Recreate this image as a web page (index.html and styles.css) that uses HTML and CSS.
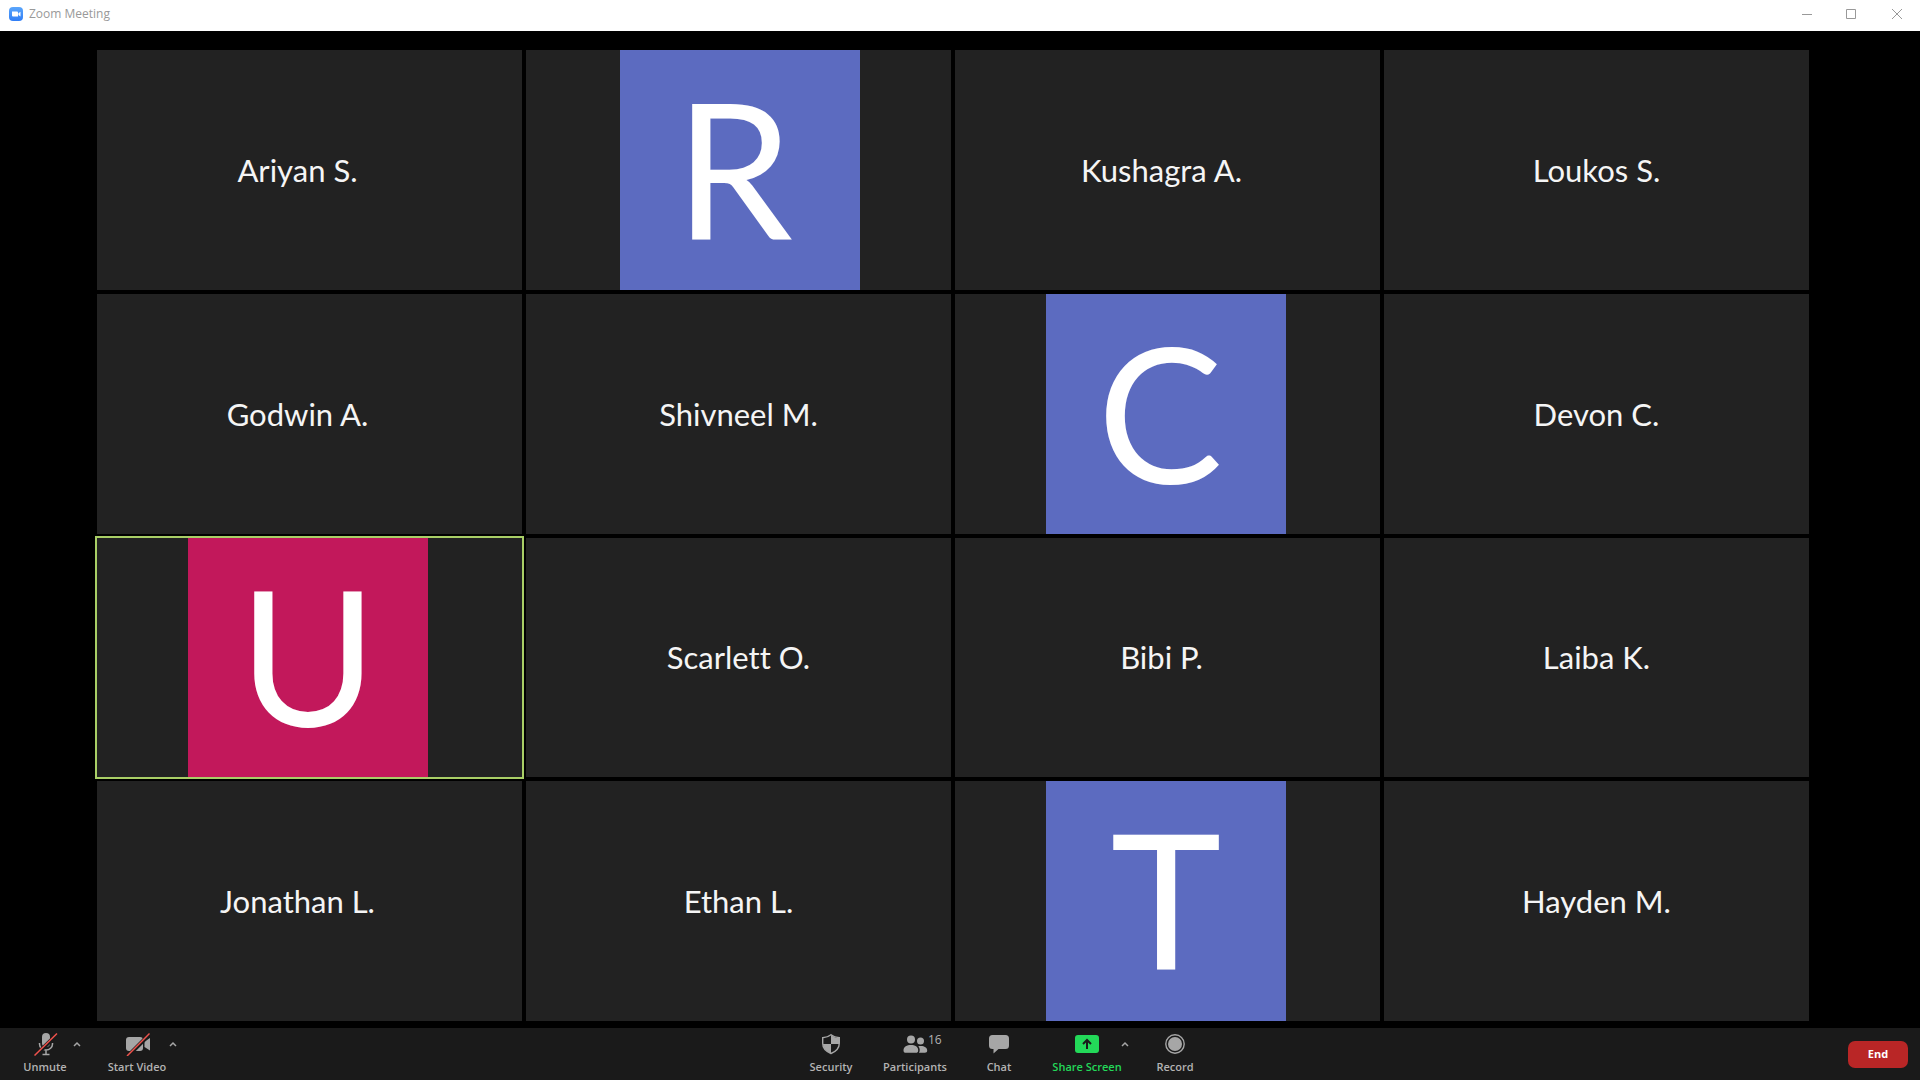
FILE: index.html
```html
<!DOCTYPE html>
<html lang="en">
<head>
<meta charset="utf-8">
<title>Zoom Meeting</title>
<link rel="stylesheet" href="styles.css">
</head>
<body>
<header class="titlebar">
  <svg class="app-icon" viewBox="0 0 14 14" aria-hidden="true">
    <defs><linearGradient id="app-blue" x1="0" y1="0" x2="0" y2="1"><stop offset="0" stop-color="#5ba6fb"/><stop offset="1" stop-color="#2f7df6"/></linearGradient></defs>
    <rect width="14" height="14" rx="4" fill="url(#app-blue)"/>
    <path d="M3 4.5h5a1 1 0 0 1 1 1v4H4a1 1 0 0 1-1-1zM9.4 6.3l2.1-1.6v4.7L9.4 7.9z" fill="#fff"/>
  </svg>
  <h1 class="title">Zoom Meeting</h1>
  <div class="window-controls">
    <button class="window-button" type="button" aria-label="Minimize"><svg viewBox="0 0 16 16"><path d="M5 8.5h10"/></svg></button>
    <button class="window-button" type="button" aria-label="Maximize"><svg viewBox="0 0 16 16"><path d="M3.5 3.5h9v9h-9z"/></svg></button>
    <button class="window-button" type="button" aria-label="Close"><svg viewBox="0 0 16 16"><path d="M3 3l10 10M13 3L3 13"/></svg></button>
  </div>
</header>

<main class="gallery">
  <div class="tile"><span class="name">Ariyan S.</span></div>
  <div class="tile"><span class="avatar avatar-wide">R</span></div>
  <div class="tile"><span class="name">Kushagra A.</span></div>
  <div class="tile"><span class="name">Loukos S.</span></div>
  <div class="tile"><span class="name">Godwin A.</span></div>
  <div class="tile"><span class="name">Shivneel M.</span></div>
  <div class="tile"><span class="avatar avatar-wide">C</span></div>
  <div class="tile"><span class="name">Devon C.</span></div>
  <div class="tile speaking"><span class="avatar avatar-pink">U</span></div>
  <div class="tile"><span class="name">Scarlett O.</span></div>
  <div class="tile"><span class="name">Bibi P.</span></div>
  <div class="tile"><span class="name">Laiba K.</span></div>
  <div class="tile"><span class="name">Jonathan L.</span></div>
  <div class="tile"><span class="name">Ethan L.</span></div>
  <div class="tile"><span class="avatar">T</span></div>
  <div class="tile"><span class="name">Hayden M.</span></div>
</main>

<footer class="toolbar">
  <div class="tools tools-left">
    <div class="split">
      <button class="tool tool-mute" type="button">
        <svg class="icon" viewBox="0 0 28 24" aria-hidden="true"><rect x="11" y="1" width="8" height="14" rx="4" fill="#a6a6a6"/><path d="M8.5 11v1a6.5 6 0 0 0 13 0v-1M15 18v4M11.500 22.500h7" fill="none" stroke="#a6a6a6" stroke-width="1.500"/><path d="M4 24L26.500 2" stroke="#1a1a1a" stroke-width="4"/><path d="M3.500 23.500L26 1.500" stroke="#ee524c" stroke-width="1.500"/></svg>
        <span>Unmute</span>
      </button>
      <button class="caret" type="button" aria-label="Audio options"><svg viewBox="0 0 8 6"><path d="M1 5l3-3 3 3"/></svg></button>
    </div>
    <div class="split">
      <button class="tool tool-video" type="button">
        <svg class="icon" viewBox="0 0 28 24" aria-hidden="true"><rect x="3" y="5" width="17" height="14" rx="3" fill="#a6a6a6"/><path d="M21.500 9.500L27 6v12.500l-5.500-3.500z" fill="#a6a6a6"/><path d="M4.500 24.500L27 2" stroke="#1a1a1a" stroke-width="4"/><path d="M4 24L26.500 1.500" stroke="#ee524c" stroke-width="1.500"/></svg>
        <span>Start Video</span>
      </button>
      <button class="caret" type="button" aria-label="Video options"><svg viewBox="0 0 8 6"><path d="M1 5l3-3 3 3"/></svg></button>
    </div>
  </div>
  <div class="tools tools-center">
    <button class="tool" type="button">
      <svg class="icon" viewBox="0 0 28 24" aria-hidden="true"><path d="M14 2.700c2.500 2 5 2.800 8.300 3v5.500c0 5-4 8.500-8.300 10.300-4.300-1.800-8.300-5.300-8.300-10.300V5.700c3.300-.2 5.800-1 8.300-3z" fill="none" stroke="#a6a6a6" stroke-width="1.400"/><path d="M14 3c2.500 2 5 2.700 8 3v6h-8zM14 12v9.300C10 19.500 6.300 16.500 6 12z" fill="#a6a6a6"/></svg>
      <span>Security</span>
    </button>
    <button class="tool" type="button">
      <span class="icon-wrap">
        <svg class="icon" viewBox="0 0 28 24" aria-hidden="true"><g fill="#a6a6a6"><circle cx="10" cy="7.500" r="4"/><circle cx="19.500" cy="9" r="3.500"/><path d="M2.500 18.500c0-4 3.500-5.500 7.500-5.500s7.200 1.500 7.200 5.500c0 1.500-.8 2.300-2.400 2.300H5c-1.700 0-2.500-.8-2.500-2.300zM17.300 14.300c4.300-1 8.900.3 8.900 4.300 0 1.500-.8 2.200-2.300 2.200h-6c1.400-2 1-4.500-.6-6.500z"/></g></svg>
        <span class="count">16</span>
      </span>
      <span>Participants</span>
    </button>
    <button class="tool" type="button">
      <svg class="icon" viewBox="0 0 28 24" aria-hidden="true"><path d="M7.500 3h13A3.500 3.500 0 0 1 24 6.500v7a3.500 3.500 0 0 1-3.500 3.500h-7L8.500 21.500V17h-1A3.500 3.500 0 0 1 4 13.500v-7A3.500 3.500 0 0 1 7.500 3z" fill="#a6a6a6"/></svg>
      <span>Chat</span>
    </button>
    <div class="split split-share">
      <button class="tool tool-share" type="button">
        <svg class="icon" viewBox="0 0 28 24" aria-hidden="true"><rect x="2" y="3" width="24" height="18" rx="3" fill="#23d959"/><path d="M14 17V8.500M10 12l4-4 4 4" fill="none" stroke="#1a1a1a" stroke-width="2"/></svg>
        <span>Share Screen</span>
      </button>
      <button class="caret" type="button" aria-label="Share options"><svg viewBox="0 0 8 6"><path d="M1 5l3-3 3 3"/></svg></button>
    </div>
    <button class="tool" type="button">
      <svg class="icon" viewBox="0 0 28 24" aria-hidden="true"><circle cx="14" cy="12" r="9.200" fill="none" stroke="#a6a6a6" stroke-width="1.400"/><circle cx="14" cy="12" r="7" fill="#a6a6a6"/></svg>
      <span>Record</span>
    </button>
  </div>
  <button class="end" type="button">End</button>
</footer>
</body>
</html>
```
FILE: styles.css
```css
* {
  box-sizing: border-box;
}

body {
  margin: 0;
  min-height: 100vh;
  display: flex;
  flex-direction: column;
  background: #000;
  font-family: "Open Sans", "Noto Sans", sans-serif;
}

button {
  margin: 0;
  padding: 0;
  border: 0;
  background: none;
  color: inherit;
  font: inherit;
}

svg {
  display: block;
}

.titlebar {
  height: 31px;
  padding: 0 0 3px 9px;
  display: flex;
  align-items: center;
  gap: 6px;
  background: #fff;
}

.app-icon {
  width: 14px;
  height: 14px;
}

.title {
  margin: 0;
  color: #999;
  font-size: 12px;
  line-height: 16px;
  font-weight: 400;
}

.window-controls {
  display: flex;
  margin-left: auto;
}

.window-button {
  width: 46px;
  height: 28px;
  display: grid;
  place-items: center;
}

.window-button svg {
  width: 16px;
  height: 16px;
  fill: none;
  stroke: #999;
}

.gallery {
  flex: 1;
  display: grid;
  grid-template-columns: repeat(4, 1fr);
  grid-auto-rows: 1fr;
  gap: 4px;
  padding: 19px 111px 7px 97px;
}

.tile {
  display: grid;
  place-items: center;
  min-height: 0;
  background: #222;
  color: #f5f5f5;
  font-family: Lato, sans-serif;
}

.name {
  font-size: 31px;
  line-height: 40px;
  font-variant-ligatures: none;
}

.tile:nth-child(4n + 1) .name {
  padding-right: 24px;
}

.tile:nth-child(4n + 3) .name {
  padding-right: 12px;
}

.avatar {
  height: 100%;
  aspect-ratio: 1;
  padding-bottom: 8px;
  display: grid;
  place-items: center;
  margin-right: 3px;
  background: #5c6bc0;
  color: #fff;
  font-size: 188px;
  line-height: 200px;
}

.tile:nth-child(4n + 2) .avatar {
  margin: 0 0 0 3px;
}

.avatar-wide {
  padding-right: 12px;
}

.avatar-pink {
  background: #c2185b;
}

.speaking {
  outline: 2px solid #a9cf66;
}

.toolbar {
  height: 52px;
  padding: 0 12px;
  display: grid;
  grid-template-columns: 1fr auto 1fr;
  align-items: center;
  background: #1a1a1a;
  color: #b3b3b3;
  font-size: 11px;
  font-weight: 600;
  line-height: 16px;
}

.tools,
.split {
  display: flex;
}

.tools-left {
  gap: 20px;
  padding-left: 5px;
}

.tools-center {
  padding-left: 86px;
}

.tool {
  width: 84px;
  height: 44px;
  display: flex;
  flex-direction: column;
  align-items: center;
  gap: 3px;
  white-space: nowrap;
}

.icon {
  width: 28px;
  height: 24px;
}

.icon-wrap {
  position: relative;
}

.count {
  position: absolute;
  left: 27px;
  top: 0;
  font-size: 12px;
  line-height: 16px;
  font-weight: 400;
}

.tool-mute {
  width: 56px;
}

.tool-video {
  width: 64px;
}

.split-share {
  padding-left: 12px;
}

.tool-share {
  width: 68px;
  color: #23d959;
}

.caret {
  width: 16px;
  height: 24px;
  margin-left: -4px;
  display: grid;
  place-items: center;
}

.caret svg {
  width: 8px;
  height: 6px;
  fill: none;
  stroke: #a6a6a6;
  stroke-width: 1.5;
}

.end {
  width: 60px;
  height: 27px;
  justify-self: end;
  border-radius: 7px;
  background: #b92626;
  color: #fff;
  font-size: 11px;
  font-weight: 700;
}
```
